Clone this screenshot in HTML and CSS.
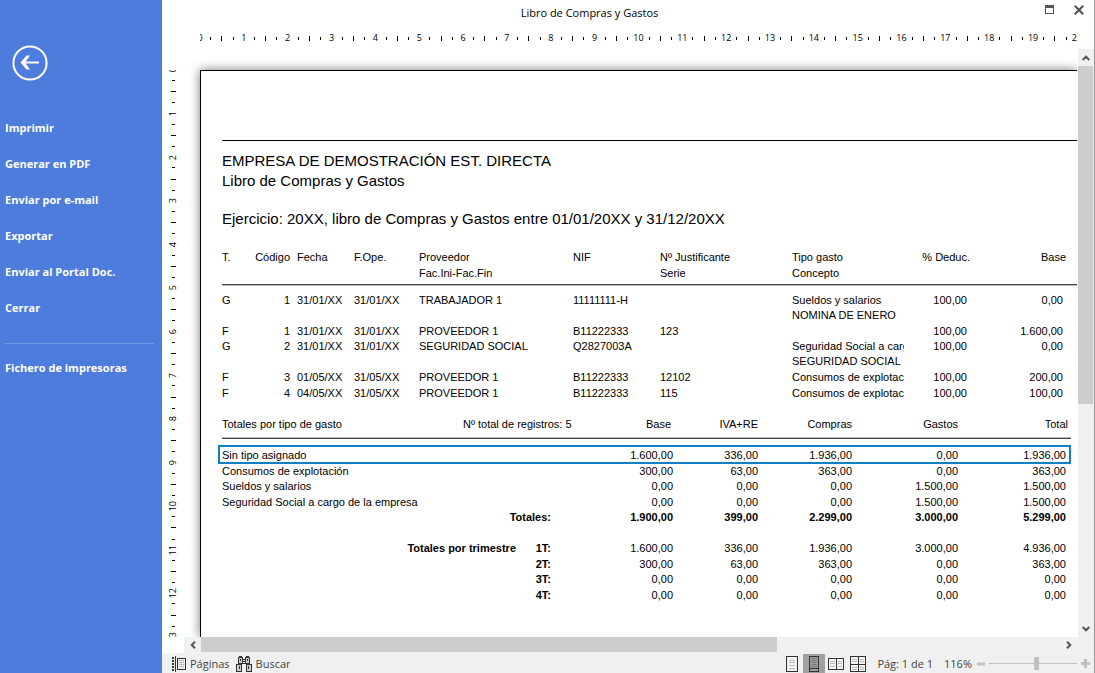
FILE: index.html
```html
<!DOCTYPE html>
<html lang="es">
<head>
<meta charset="utf-8">
<title>Libro de Compras y Gastos</title>
<link rel="stylesheet" href="styles.css">
</head>
<body>
<aside class="sidebar">
  <button class="back" aria-label="Volver">
    <svg width="36" height="36" viewBox="0 0 36 36" fill="none" stroke="#fff"><circle cx="18" cy="18" r="16.6" stroke-width="2"/><path d="M27 17.5H11" stroke-width="2"/><path d="M18 10.5h-3.5L8.5 17.5l6 7H18l-5-7z" fill="#fff" stroke="none"/></svg>
  </button>
  <nav class="menu">
    <a href="#">Imprimir</a>
    <a href="#">Generar en PDF</a>
    <a href="#">Enviar por e-mail</a>
    <a href="#">Exportar</a>
    <a href="#">Enviar al Portal Doc.</a>
    <a href="#">Cerrar</a>
  </nav>
  <nav class="menu secondary">
    <a href="#">Fichero de impresoras</a>
  </nav>
</aside>
<main class="window">
  <header class="titlebar">
    <h1>Libro de Compras y Gastos</h1>
    <div class="controls">
      <button aria-label="Maximizar"><svg width="10" height="10" viewBox="0 0 10 10" shape-rendering="crispEdges"><path d="M0 0h9v9H0zM1 3v5h7V3z" fill="#555" fill-rule="evenodd"/></svg></button>
      <button aria-label="Cerrar ventana"><svg width="10" height="10" viewBox="0 0 10 10"><path d="M.8.8l8.4 8.4M9.2.8L.8 9.2" stroke="#555" stroke-width="2.2"/></svg></button>
    </div>
  </header>
  <div class="ruler horizontal" data-units="20"></div>
  <section class="viewport">
    <div class="ruler vertical" data-units="13"></div>
    <article class="sheet">
      <div class="report">
        <h2>EMPRESA DE DEMOSTRACIÓN EST. DIRECTA</h2>
        <h2>Libro de Compras y Gastos</h2>
        <h3>Ejercicio: 20XX, libro de Compras y Gastos entre 01/01/20XX y 31/12/20XX</h3>
        <table class="entries">
          <colgroup><col class="w-t"><col class="w-code"><col class="w-date"><col class="w-ope"><col class="w-prov"><col class="w-nif"><col class="w-just"><col class="w-type"><col class="w-ded"><col></colgroup>
          <thead><tr><th>T.</th><th class="num">Código</th><th class="date">Fecha</th><th>F.Ope.</th><th>Proveedor<br>Fac.Ini-Fac.Fin</th><th>NIF</th><th>Nº Justificante<br>Serie</th><th>Tipo gasto<br>Concepto</th><th class="num">% Deduc.</th><th class="num base">Base</th></tr></thead>
          <tbody>
            <tr class="double"><td>G</td><td class="num">1</td><td class="date">31/01/XX</td><td>31/01/XX</td><td>TRABAJADOR 1</td><td>11111111-H</td><td></td><td class="clip">Sueldos y salarios<br>NOMINA DE ENERO</td><td class="num ded">100,00</td><td class="num base">0,00</td></tr>
            <tr><td>F</td><td class="num">1</td><td class="date">31/01/XX</td><td>31/01/XX</td><td>PROVEEDOR 1</td><td>B11222333</td><td>123</td><td></td><td class="num ded">100,00</td><td class="num base">1.600,00</td></tr>
            <tr class="double"><td>G</td><td class="num">2</td><td class="date">31/01/XX</td><td>31/01/XX</td><td>SEGURIDAD SOCIAL</td><td>Q2827003A</td><td></td><td class="clip">Seguridad Social a cargo<br>SEGURIDAD SOCIAL M</td><td class="num ded">100,00</td><td class="num base">0,00</td></tr>
            <tr class="tall"><td>F</td><td class="num">3</td><td class="date">01/05/XX</td><td>31/05/XX</td><td>PROVEEDOR 1</td><td>B11222333</td><td>12102</td><td class="clip">Consumos de explotación</td><td class="num ded">100,00</td><td class="num base">200,00</td></tr>
            <tr><td>F</td><td class="num">4</td><td class="date">04/05/XX</td><td>31/05/XX</td><td>PROVEEDOR 1</td><td>B11222333</td><td>115</td><td class="clip">Consumos de explotación</td><td class="num ded">100,00</td><td class="num base">100,00</td></tr>
          </tbody>
        </table>
        <table class="totals">
          <colgroup><col class="w-label"><col class="w-mid"><col class="w-quarter"><col class="w-base"><col class="w-iva"><col class="w-buy"><col class="w-exp"><col></colgroup>
          <thead><tr><th>Totales por tipo de gasto</th><th colspan="2">Nº total de registros: 5</th><th class="num base-head">Base</th><th class="num head">IVA+RE</th><th class="num head">Compras</th><th class="num head">Gastos</th><th class="num last">Total</th></tr></thead>
          <tbody class="by-type">
            <tr class="selected"><td>Sin tipo asignado</td><td colspan="2"></td><td class="num">1.600,00</td><td class="num">336,00</td><td class="num">1.936,00</td><td class="num">0,00</td><td class="num last">1.936,00</td></tr>
            <tr><td>Consumos de explotación</td><td colspan="2"></td><td class="num">300,00</td><td class="num">63,00</td><td class="num">363,00</td><td class="num">0,00</td><td class="num last">363,00</td></tr>
            <tr><td>Sueldos y salarios</td><td colspan="2"></td><td class="num">0,00</td><td class="num">0,00</td><td class="num">0,00</td><td class="num">1.500,00</td><td class="num last">1.500,00</td></tr>
            <tr><td>Seguridad Social a cargo de la empresa</td><td colspan="2"></td><td class="num">0,00</td><td class="num">0,00</td><td class="num">0,00</td><td class="num">1.500,00</td><td class="num last">1.500,00</td></tr>
            <tr class="sum"><td colspan="3" class="num">Totales:</td><td class="num">1.900,00</td><td class="num">399,00</td><td class="num">2.299,00</td><td class="num">3.000,00</td><td class="num last">5.299,00</td></tr>
          </tbody>
          <tbody class="by-quarter">
            <tr><th colspan="2" class="num">Totales por trimestre</th><th class="num">1T:</th><td class="num">1.600,00</td><td class="num">336,00</td><td class="num">1.936,00</td><td class="num">3.000,00</td><td class="num last">4.936,00</td></tr>
            <tr><th colspan="3" class="num">2T:</th><td class="num">300,00</td><td class="num">63,00</td><td class="num">363,00</td><td class="num">0,00</td><td class="num last">363,00</td></tr>
            <tr><th colspan="3" class="num">3T:</th><td class="num">0,00</td><td class="num">0,00</td><td class="num">0,00</td><td class="num">0,00</td><td class="num last">0,00</td></tr>
            <tr><th colspan="3" class="num">4T:</th><td class="num">0,00</td><td class="num">0,00</td><td class="num">0,00</td><td class="num">0,00</td><td class="num last">0,00</td></tr>
          </tbody>
        </table>
      </div>
    </article>
  </section>
  <div class="vscroll">
    <button aria-label="Subir"><svg width="8" height="6" viewBox="0 0 8 6"><path d="M.7 5L4 1.7 7.3 5" fill="none" stroke="#555" stroke-width="2"/></svg></button>
    <div class="track"><div class="thumb"></div></div>
    <button aria-label="Bajar"><svg width="8" height="6" viewBox="0 0 8 6"><path d="M.7 1L4 4.3 7.3 1" fill="none" stroke="#555" stroke-width="2"/></svg></button>
  </div>
  <div class="hscroll">
    <button aria-label="Izquierda"><svg width="6" height="8" viewBox="0 0 6 8"><path d="M5 .7L1.7 4 5 7.3" fill="none" stroke="#555" stroke-width="2"/></svg></button>
    <div class="track"><div class="thumb"></div></div>
    <button aria-label="Derecha"><svg width="6" height="8" viewBox="0 0 6 8"><path d="M1 .7L4.300 4 1 7.3" fill="none" stroke="#555" stroke-width="2"/></svg></button>
  </div>
  <footer class="status">
    <button class="tool">
      <svg width="14" height="16" viewBox="0 0 14 16" shape-rendering="crispEdges"><path d="M0 1h2v2H0zM0 4h2v2H0zM0 7h2v2H0zM0 10h2v2H0zM0 13h2v2H0zM3 0h1v16H3zM5 2h9v12H5zM6 3v10h7V3z" fill="#333" fill-rule="evenodd"/><path d="M7 4h5v1H7zM7 6h5v1H7zM7 8h5v1H7zM7 10h5v1H7z" fill="#bbb"/></svg>
      Páginas</button>
    <button class="tool">
      <svg width="16" height="16" viewBox="0 0 16 16" shape-rendering="crispEdges"><path d="M3 0h3v1H3zM10 0h3v1h-3zM2 1h5v7H2zM9 1h5v7H9zM0 8h6v8H0zM10 8h6v8h-6zM7 3h2v1H7zM7 5h2v1H7zM6 7h4v1H6z" fill="#333"/><path d="M3 2h3v5H3zM10 2h3v5h-3zM1 9h4v6H1zM11 9h4v6h-4z" fill="#ccc"/><path d="M4 3h1v2H4zM11 3h1v2h-1zM3 10h1v3H3zM12 10h1v3h-1z" fill="#333"/></svg>
      Buscar</button>
    <div class="views">
      <button aria-label="Una página"><svg width="12" height="16" viewBox="0 0 12 16" shape-rendering="crispEdges"><path d="M.5.5h11v15H.5z" fill="#f4f4f4" stroke="#333"/><path d="M3 4.500h6M3 6.500h6M3 9.500h6M3 12.500h6" stroke="#bbb"/></svg></button>
      <button class="active" aria-label="Continua"><svg width="10" height="16" viewBox="0 0 10 16" shape-rendering="crispEdges"><path d="M.5 0v16M9.500 0v16M0 .5h10M0 12.500h10M0 15.500h10" stroke="#333"/><path d="M2 2.500h6M2 4.500h6M2 6.500h6M2 8.500h6M2 10.500h6" stroke="#777"/></svg></button>
      <button aria-label="Dos páginas"><svg width="16" height="12" viewBox="0 0 16 12" shape-rendering="crispEdges"><path d="M.5.5h15v11H.5zM8.500 0v12" fill="#f4f4f4" stroke="#333"/><path d="M2 3.500h5M2 5.500h5M2 8.500h5M10 3.500h4M10 5.500h4M10 8.500h4" stroke="#bbb"/></svg></button>
      <button aria-label="Varias páginas"><svg width="16" height="16" viewBox="0 0 16 16" shape-rendering="crispEdges"><path d="M.5.5h15v15H.5zM8.500 0v16M0 8.500h16" fill="#f4f4f4" stroke="#333"/><path d="M2 3.500h5M2 5.500h5M10 3.500h4M10 5.500h4M2 11.500h5M2 13.500h5M10 11.500h4M10 13.500h4" stroke="#bbb"/></svg></button>
    </div>
    <span class="pages">Pág: 1 de 1</span>
    <label class="percent" for="zoom">116%</label>
    <button class="step" aria-label="Alejar"><svg width="8" height="8" viewBox="0 0 8 8"><path d="M0 2.500h8v3H0z" fill="#c0c0c0"/></svg></button>
    <input id="zoom" class="zoom" type="range" min="0" max="100" value="54">
    <button class="step" aria-label="Acercar"><svg width="9" height="9" viewBox="0 0 9 9"><path d="M0 3h3V0h3v3h3v3H6v3H3V6H0z" fill="#c0c0c0"/></svg></button>
  </footer>
</main>
<script src="rulers.js"></script>
</body>
</html>
```

FILE: styles.css
```css
* { box-sizing: border-box; }
body {
  margin: 0;
  height: 100vh;
  display: grid;
  grid-template-columns: 162px minmax(0, 1fr);
  background: #fff;
  color: #000;
  font: 11px/16px "Open Sans", "Noto Sans", sans-serif;
  overflow: hidden;
}
button { border: 0; padding: 0; background: none; font: inherit; color: inherit; display: flex; align-items: center; justify-content: center; }
svg { display: block; flex: none; }
h1, h2, h3 { margin: 0; font-weight: 400; }

.sidebar { background: #4e7cdc; padding: 45px 8px 0 4px; }
.back { margin: 0 0 29px 8px; }
.menu { display: flex; flex-direction: column; }
.menu a { color: #fff; font-weight: 700; line-height: 36px; text-decoration: none; padding-left: 1px; }
.secondary { border-top: 1px solid #7197e6; margin-top: 17px; padding-top: 6px; }

.window {
  display: grid;
  grid-template-columns: 22px 16px minmax(0, 1fr) 17px;
  grid-template-rows: 28px 21px minmax(0, 1fr) 16px 20px;
  border-right: 1px solid #999;
  min-height: 0;
}
.titlebar { grid-column: 1 / -1; display: grid; grid-template-columns: 1fr 77px; }
.titlebar h1 { font-size: 11px; line-height: 26px; text-align: center; }
.controls { display: flex; align-items: flex-start; justify-content: flex-end; gap: 19px; padding: 5px 10px 0 0; }

.ruler { overflow: hidden; display: flex; align-items: center; font: 9px/12px "Open Sans", sans-serif; }
.unit { flex: 1; display: flex; align-items: center; justify-content: space-between; }
.unit i { background: #000; }
.mark { display: flex; align-items: center; justify-content: center; white-space: nowrap; }
.horizontal { grid-column: 3; grid-row: 2; padding-bottom: 1px; }
.horizontal .mark { width: 0; height: 18px; }
.horizontal i { width: 1px; height: 3px; }
.horizontal i.half { height: 5px; }
.vertical { flex-direction: column; margin-top: 21px; width: 22px; }
.vertical .unit { flex-direction: column; }
.vertical .mark { height: 0; width: 22px; }
.vertical .mark span { writing-mode: vertical-rl; transform: rotate(180deg); }
.vertical i { width: 3px; height: 1px; }
.vertical i.half { width: 5px; }

.viewport { grid-column: 1 / 4; grid-row: 3; display: grid; grid-template-columns: 38px minmax(0, 1fr); overflow: hidden; }
.sheet { margin-top: 21px; background: #fff; border: solid #000; border-width: 1px 0 0 1px; box-shadow: 0 0 10px #777; padding: 69px 0 0 21px; }
.report { border-top: 1px solid #000; padding-top: 10px; font-family: "Liberation Sans", Arial, sans-serif; }
.report h2 { font-size: 15px; line-height: 20px; }
.report h3 { font-size: 15px; line-height: 20px; margin-top: 18px; }

table { border-collapse: separate; border-spacing: 0; table-layout: fixed; width: 100%; font: 11px/15px "Liberation Sans", Arial, sans-serif; }
th, td { padding: 0; font-weight: 400; text-align: left; vertical-align: top; white-space: nowrap; height: 15px; }
.num { text-align: right; }
.entries { margin-top: 20px; }
.entries thead th { line-height: 16px; padding-bottom: 4px; border-bottom: 1px solid #bbb; box-shadow: inset 0 -1px #444; }
.double td { height: 31px; }
.entries tbody tr:first-child td { padding-top: 7px; height: 38px; }
.tall td { height: 16px; }
.date { padding-left: 7px; }
.ded { padding-right: 3px; }
.clip { overflow: hidden; }
thead .base { padding-right: 11px; }
tbody .base { padding-right: 14px; }
.w-t { width: 28px; } .w-code { width: 40px; } .w-date { width: 64px; } .w-ope { width: 65px; } .w-prov { width: 154px; }
.w-nif { width: 87px; } .w-just { width: 132px; } .w-type { width: 112px; } .w-ded { width: 66px; }

.totals { margin-top: 16px; width: calc(100% - 6px); }
.totals thead th { padding-bottom: 6px; border-bottom: 1px solid #444; box-shadow: inset 0 -1px #bbb; }
.totals tbody tr:nth-child(odd) > * { height: 16px; }
.totals .by-type tr:first-child td { padding-top: 9px; height: 25px; }
.totals .by-quarter tr:first-child > * { padding-top: 15px; height: 31px; }
.totals tbody th, .sum td { font-weight: 700; }
.base-head { padding-right: 2px; }
.totals .head { position: relative; }
.totals .last { padding-right: 5px; }
.totals thead .last { padding-right: 3px; }
.selected { position: relative; }
.selected td:first-child::before { content: ""; position: absolute; inset: 6px 0 0 -4px; border: 2px solid #1080c4; }
.w-label { width: 241px; } .w-mid { width: 53px; } .w-quarter { width: 35px; } .w-base { width: 122px; }
.w-iva { width: 85px; } .w-buy { width: 94px; } .w-exp { width: 106px; }

.vscroll { grid-column: 4; grid-row: 3; margin-left: 1px; display: flex; flex-direction: column; background: #f0f0f0; }
.vscroll button { height: 17px; width: 15px; }
.track { flex: 1; }
.vscroll .thumb { height: 61%; width: 15px; background: #cdcdcd; }
.hscroll { grid-column: 2 / -1; grid-row: 4; display: flex; background: #f0f0f0; }
.hscroll button { width: 17px; }
.hscroll button:last-child { margin-right: 17px; }
.hscroll .thumb { width: 67%; height: 15px; background: #cdcdcd; }

.status { grid-column: 1 / -1; grid-row: 5; display: flex; align-items: center; background: #f0f0f0; color: #444; padding: 1px 4px 0 10px; }
.tool { gap: 4px; margin-right: 6px; }
.views { display: flex; align-self: stretch; margin-left: auto; margin-right: 8px; }
.views button { width: 22px; }
.views .active { background: #a0a0a0; }
.percent { margin-left: 11px; }
.step { margin-left: 5px; }
.zoom { appearance: none; width: 88px; height: 16px; margin: 0 0 0 4px; background: linear-gradient(#c4c4c4, #c4c4c4) center / 100% 1px no-repeat; }
.zoom::-webkit-slider-thumb { appearance: none; width: 5px; height: 13px; background: #c0c0c0; }
.zoom + .step { margin-left: 4px; }
```

FILE: rulers.js
```js
document.querySelectorAll('.ruler').forEach(function (ruler) {
  var units = Number(ruler.dataset.units);
  var html = '';
  for (var n = 0; n < units; n++) {
    html += '<div class="unit"><span class="mark"><span>' + n + '</span></span><i></i><i class="half"></i><i></i><b></b></div>';
  }
  ruler.innerHTML = html + '<span class="mark"><span>' + units + '</span></span>';
});
```
